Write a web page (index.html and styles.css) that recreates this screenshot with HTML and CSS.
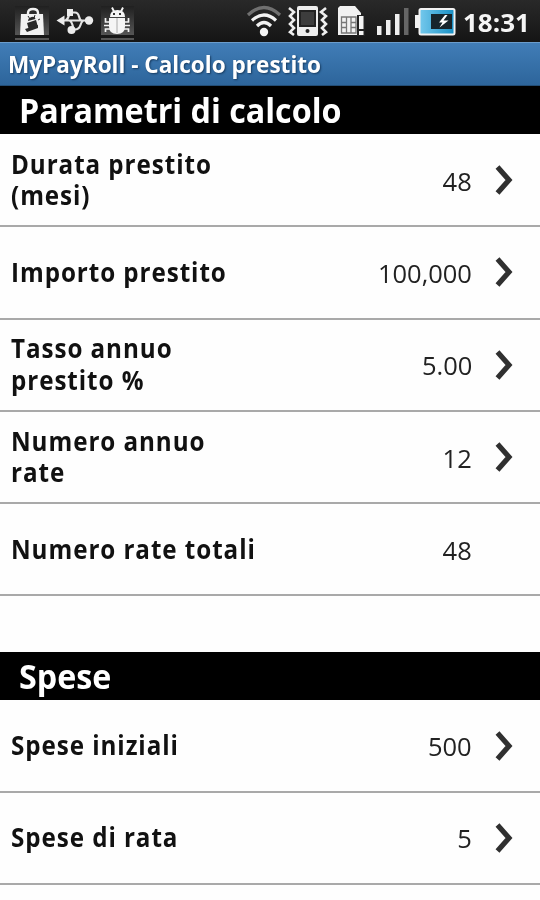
FILE: index.html
```
<!DOCTYPE html>
<html lang="it">
<head>
<meta charset="utf-8">
<title>MyPayRoll - Calcolo prestito</title>
<link rel="stylesheet" href="styles.css">
</head>
<body>
<svg class="defs" width="0" height="0"><symbol id="chevron" viewBox="0 0 24 34"><path d="M3.500 4 15 17 3.500 30"/></symbol></svg>
<div class="status">
  <svg width="540" height="42" viewBox="0 0 540 42">
    <defs>
      <linearGradient id="tile" x2="0" y2="1"><stop stop-color="#202020"/><stop offset="1" stop-color="#555"/></linearGradient>
      <linearGradient id="cell"><stop stop-color="#75c9ed"/><stop offset="1" stop-color="#168fc5"/></linearGradient>
    </defs>
    <path fill="url(#tile)" d="M15 6h34v29H15zM101 6h33v29h-33z"/>
    <path fill="#555" d="M15 38h34v2H15zM101 38h33v2h-33z"/>
    <path fill="none" stroke="#f2f2f2" stroke-width="2.400" d="M28 15v-2q0-4 5-4t5 4v2"/>
    <path fill="#f2f2f2" d="M21 14h22l1 21H20z"/>
    <g fill="#292929"><path d="m27 23 9-3 2 7-9 3z"/><path d="M28 21q0-3 3.500-4t4 2z"/><path d="m25 29 13-4v3l-11 4z"/></g>
    <path stroke="#292929" d="m28 16 2 3m5-4-1 3m4 2 2-1"/>
    <g fill="none" stroke="#e4e4e4" stroke-width="2.200"><path d="M61 20.500h27M65 20.500q2 0 3.500-4t4.500-4h2q3 0 4 4t3 4M69 20.500q2 0 3.500 4.500t-1 4.500M71 29.500h4q4 0 5.500-4.500t3.500-4.500"/></g>
    <g fill="#ececec"><path d="m56.500 20.500 8-5v10zM67 9h6v7h-6z"/><circle cx="89" cy="20.500" r="4.200"/><circle cx="71.500" cy="30" r="4"/></g>
    <g fill="#f5f5f5"><path d="M110 17q0-7 7.500-7t7.500 7z"/><path d="M109 18h16v8.500q0 7.500-8 7.500t-8-7.500z"/></g>
    <g fill="none" stroke="#f5f5f5" stroke-width="1.900"><path d="m112 7.500 2 4m9-4-2 4"/><path stroke-width="1.700" d="M110 22h-4.500v-4m4 7.500H104m6 3.500h-4.500v3M124 22h4.500v-4m-4 7.500h5.500m-6 3.500h4.500v3"/></g>
    <path stroke="#aaa" d="M117 18v15"/><path fill="#333" d="M113 13h2v2h-2zM119 13h2v2h-2z"/><path stroke="#444" stroke-width=".8" d="M109 17.500h16"/>
    <g fill="none" stroke-width="3.200"><path stroke="#707070" d="M248 15q16-15 32 0"/><path stroke="#f2f2f2" d="M252 20.500q12-11 24 0M257 26q7-7 14 0"/></g><circle cx="264" cy="32" r="4.200" fill="#f5f5f5"/>
    <rect x="297" y="6" width="21" height="30" rx="2" fill="#eee"/><path fill="#222" d="M299 10h17v17h-17z"/><path fill="#3d3d3d" d="M301 12h13v13h-13z"/><circle cx="307.500" cy="31" r="2" fill="#222"/>
    <path fill="none" stroke="#eee" stroke-width="2.600" d="m289 8 5 4-4 4 4 4-4 4 4 4-4 4 4 3M326 8l-5 4 5 4-4 4 4 4-4 4 4 4-4 3"/>
    <path fill="#f1f1f1" d="M340 6h15l6 7v22h-23V8z"/><path fill="none" stroke="#777" stroke-width="1.300" d="M341.500 17H356v16h-14.500zM341 22.500h5.500v5H341m15-5h-5v5h5M346.500 17v16m4.500-16v16"/>
    <path fill="#222" d="M357 15h8v21h-8z"/><path fill="#f5f5f5" d="M359 16h4.500v13H359zM359 31h4.500v4H359z"/>
    <path fill="#eee" d="M377 26h4.500v9H377zM386 20h4.500v15H386zM395 14h4.500v21H395z"/><path fill="#666" d="M404 8h4.500v27H404z"/>
    <path fill="#f2f2f2" d="M415 15h4v13h-4z"/><rect x="419.500" y="9" width="35" height="25.500" rx="1.500" fill="url(#cell)" stroke="#f2f2f2" stroke-width="2"/><path fill="#17242b" d="M431 14h21v15h-21z"/><path fill="#fff" d="m445 15-6 7.500h3.500l-3 5 9-7h-5l4-5.500z"/>
  </svg>
  <span class="clock">18:31</span>
</div>
<header class="title"><span>MyPayRoll - Calcolo prestito</span></header>
<h2 class="section"><span>Parametri di calcolo</span></h2>
<div class="list first">
  <div class="row"><div class="label">Durata prestito<br>(mesi)</div><div class="value">48</div><svg class="arrow"><use href="#chevron"/></svg></div>
  <div class="row"><div class="label">Importo prestito</div><div class="value">100,000</div><svg class="arrow"><use href="#chevron"/></svg></div>
  <div class="row"><div class="label">Tasso annuo<br>prestito %</div><div class="value">5.00</div><svg class="arrow"><use href="#chevron"/></svg></div>
  <div class="row"><div class="label">Numero annuo<br>rate</div><div class="value">12</div><svg class="arrow"><use href="#chevron"/></svg></div>
  <div class="row"><div class="label">Numero rate totali</div><div class="value">48</div><div class="arrow"></div></div>
</div>
<h2 class="section second"><span>Spese</span></h2>
<div class="list">
  <div class="row"><div class="label">Spese iniziali</div><div class="value">500</div><svg class="arrow"><use href="#chevron"/></svg></div>
  <div class="row"><div class="label">Spese di rata</div><div class="value">5</div><svg class="arrow"><use href="#chevron"/></svg></div>
</div>
</body>
</html>
```
FILE: styles.css
```
* { box-sizing: border-box; }
body { margin: 0; width: 540px; height: 900px; overflow: hidden; background: #fefefe; color: #111; font-family: "Open Sans", "Noto Sans", sans-serif; }
.defs { position: absolute; }
.status { position: relative; height: 42px; background: linear-gradient(#292929, #151515); }
.status svg { display: block; }
.clock { position: absolute; left: 463px; top: 5px; color: #f5f5f5; font-size: 25px; font-weight: 700; line-height: 34px; transform: scaleX(1.04); transform-origin: left; }
.title { height: 44px; padding-left: 7.5px; background: linear-gradient(#417db7, #2d659b); border-top: 1px solid #6b9dcc; border-bottom: 1px solid #234d75; color: #fff; font-size: 23px; font-weight: 700; line-height: 42px; text-shadow: 1px 1px 2px #173b60; white-space: nowrap; }
.title span, .section span { display: inline-block; transform-origin: left; }
.title span { transform: scaleX(.981); }
.section { margin: 0; height: 48px; padding-left: 18.5px; background: #000; color: #fff; font-size: 34px; font-weight: 700; line-height: 49px; white-space: nowrap; }
.section span { transform: scaleX(.949); }
.first { padding-top: 1px; }
.second { margin-top: 56px; }
.row { display: flex; align-items: center; height: 92.3px; padding-left: 11px; border-bottom: 2px solid #a9a9a9; }
.label { flex: 1; font-size: 26px; font-weight: 700; line-height: 31.5px; letter-spacing: 1px; white-space: nowrap; transform: scaleX(.931); transform-origin: left; }
.value { font-size: 26px; line-height: 32px; padding-top: 1px; color: #222; transform: scaleX(.98); transform-origin: right; }
.arrow { width: 24px; height: 34px; margin: 0 22px 0 22px; fill: none; stroke: #303030; stroke-width: 5.2; filter: blur(.7px); }
```
